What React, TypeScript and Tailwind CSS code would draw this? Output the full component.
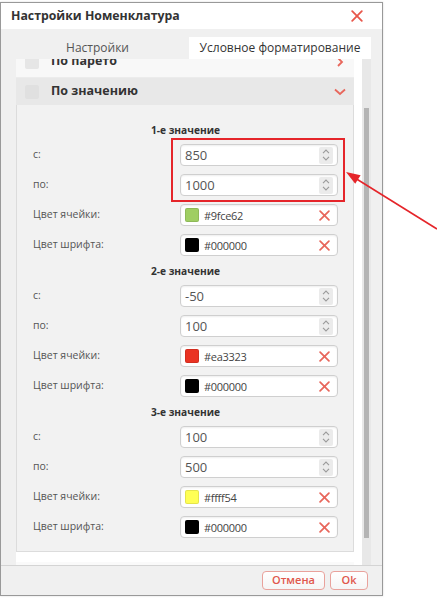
import React from "react";

const XIcon = ({ size = 10, color = "#e8675c", sw = 1.6 }: { size?: number; color?: string; sw?: number }) => (
  <svg width={size} height={size} viewBox="0 0 10 10">
    <path d="M1 1 L9 9 M9 1 L1 9" stroke={color} strokeWidth={sw} strokeLinecap="round" fill="none" />
  </svg>
);

const Spinner = () => (
  <span className="flex h-[17px] w-[14px] flex-col items-center justify-center gap-[2px] rounded-[2px] bg-[#ebebeb]">
    <svg width="8" height="5" viewBox="0 0 8 5">
      <path d="M1 4.2 L4 1 L7 4.2" stroke="#9a9a9a" strokeWidth="1.1" fill="none" />
    </svg>
    <svg width="8" height="5" viewBox="0 0 8 5">
      <path d="M1 0.8 L4 4 L7 0.8" stroke="#9a9a9a" strokeWidth="1.1" fill="none" />
    </svg>
  </span>
);

const NumInput = ({ value }: { value: string }) => (
  <div className="flex h-[22px] w-[158px] items-center rounded-[4px] border border-[#cfcfcf] bg-white pl-[4px] pr-[4px] shadow-[inset_0_1px_2px_rgba(0,0,0,0.07)]">
    <span className="flex-1 text-[13px] leading-none text-[#555]">{value}</span>
    <Spinner />
  </div>
);

const ColorInput = ({ color, value }: { color: string; value: string }) => (
  <div className="flex h-[22px] w-[158px] items-center rounded-[4px] border border-[#cfcfcf] bg-white pl-[4px] pr-[4px] shadow-[inset_0_1px_2px_rgba(0,0,0,0.07)]">
    <span className="h-[14px] w-[14px] rounded-[2px] border border-black/10" style={{ backgroundColor: color }} />
    <span className="ml-[5px] flex-1 text-[11px] leading-none tracking-[-0.3px] text-[#444]">{value}</span>
    <span className="mr-[3px] flex items-center">
      <XIcon size={11} />
    </span>
  </div>
);

const Row = ({ label, children }: { label: string; children: React.ReactNode }) => (
  <div className="flex items-center justify-between">
    <span className="text-[10.5px] text-[#555]">{label}</span>
    {children}
  </div>
);

const Group = ({
  title,
  from,
  to,
  cell,
  cellText,
  last,
}: {
  title: string;
  from: string;
  to: string;
  cell: string;
  cellText: string;
  last?: boolean;
}) => (
  <div className={last ? "" : "pb-[8px]"}>
    <div className="h-[14px] text-center text-[10.2px] font-bold leading-[14px] text-[#333]">{title}</div>
    <div className="mt-[7px] flex flex-col gap-[8px]">
      <Row label="с:">
        <NumInput value={from} />
      </Row>
      <Row label="по:">
        <NumInput value={to} />
      </Row>
      <Row label="Цвет ячейки:">
        <ColorInput color={cell} value={cellText} />
      </Row>
      <Row label="Цвет шрифта:">
        <ColorInput color="#000000" value="#000000" />
      </Row>
    </div>
  </div>
);

export default function App() {
  return (
    <div className="relative h-[599px] w-[437px] overflow-hidden bg-white font-['Open_Sans','Liberation_Sans',sans-serif]">
      <div className="mt-[2px] flex h-[594px] w-[383px] flex-col border border-[#999] bg-[#f0f0f0] shadow-[0_0_2px_rgba(0,0,0,0.15)]">
        {/* title */}
        <div className="flex h-[26px] shrink-0 items-center justify-between bg-white pl-[10px] pr-[19px]">
          <span className="text-[12.3px] font-bold text-[#333]">Настройки Номенклатура</span>
          <XIcon size={12} sw={1.5} color="#e8574b" />
        </div>
        {/* tabs */}
        <div className="flex h-[30px] shrink-0 items-end pl-[15px]">
          <div className="flex h-[22px] w-[163px] items-center justify-center text-[12px] text-[#555]">Настройки</div>
          <div className="ml-[10px] flex h-[22px] w-[182px] items-center justify-center bg-white text-[12px] text-[#333]">
            Условное форматирование
          </div>
        </div>
        {/* panel */}
        <div className="ml-[15px] flex h-[506px] w-[355px] shrink-0 bg-white">
          <div className="h-full w-[346px] overflow-hidden">
            <div className="mt-[-9px] w-[338px]">
              <div className="flex h-[28px] items-center border-b border-[#ececec] bg-[#f8f8f8] pb-[4px] pl-[9px] pr-[9px]">
                <span className="h-[14px] w-[14px] rounded-[2px] bg-[#e6e6e6]" />
                <span className="ml-[12px] flex-1 text-[12.5px] font-bold text-[#333]">По парето</span>
                <svg width="10" height="10" viewBox="0 0 10 10">
                  <path d="M3 1 L7 5 L3 9" stroke="#e8675c" strokeWidth="1.8" fill="none" />
                </svg>
              </div>
              <div className="flex h-[27px] items-center bg-[#e8e8e8] pl-[9px] pr-[8px]">
                <span className="h-[14px] w-[14px] rounded-[2px] bg-[#e0e0e0]" />
                <span className="ml-[12px] flex-1 text-[12.5px] font-bold text-[#333]">По значению</span>
                <svg width="12" height="8" viewBox="0 0 12 8">
                  <path d="M1 1.5 L6 6 L11 1.5" stroke="#e8675c" strokeWidth="1.8" fill="none" />
                </svg>
              </div>
              <div className="border-x border-b border-[#dcdcdc] bg-[#f2f2f2] pb-[13px] pl-[16px] pr-[15px] pt-[18px]">
                <Group title="1-е значение" from="850" to="1000" cell="#9fce62" cellText="#9fce62" />
                <Group title="2-е значение" from="-50" to="100" cell="#ea3323" cellText="#ea3323" />
                <Group title="3-е значение" from="100" to="500" cell="#ffff54" cellText="#ffff54" last />
              </div>
              <div className="mt-[10px] flex h-[27px] items-center bg-[#fafafa] pl-[9px] pr-[9px]">
                <span className="h-[14px] w-[14px] rounded-[2px] bg-[#eeeeee]" />
                <span className="ml-[12px] flex-1 text-[12.5px] font-bold text-[#333]">По цвету</span>
                <svg width="10" height="10" viewBox="0 0 10 10">
                  <path d="M3 1 L7 5 L3 9" stroke="#e8675c" strokeWidth="1.8" fill="none" />
                </svg>
              </div>
            </div>
          </div>
          <div className="h-full w-[9px] bg-[#e8e8e8] px-[2px] pt-[49px]">
            <div className="h-[430px] w-[5px] bg-[#b4b4b4]" />
          </div>
        </div>
        {/* footer */}
        <div className="flex h-[30px] shrink-0 items-center justify-end gap-[5px] border-t border-[#d4d4d4] pr-[14px]">
          <button className="flex h-[19px] w-[63px] items-center justify-center rounded-[4px] border border-[#e9a29c] bg-gradient-to-b from-white to-[#f5f5f5] text-[11px] font-semibold text-[#e0574c]">
            Отмена
          </button>
          <button className="flex h-[19px] w-[38px] items-center justify-center rounded-[4px] border border-[#e9a29c] bg-gradient-to-b from-white to-[#f5f5f5] text-[11px] font-semibold text-[#e0574c]">
            Ok
          </button>
        </div>
      </div>

      {/* annotation */}
      <div className="pointer-events-none absolute left-[171px] top-[138px] h-[64px] w-[174px] border-2 border-[#e5252a]" />
      <svg className="pointer-events-none absolute left-0 top-0" width="437" height="599" viewBox="0 0 437 599">
        <line x1="437" y1="229" x2="355" y2="178" stroke="#e5252a" strokeWidth="1.6" />
        <polygon points="346,172 360.6,175.2 355.2,183.7" fill="#e5252a" />
      </svg>
    </div>
  );
}
